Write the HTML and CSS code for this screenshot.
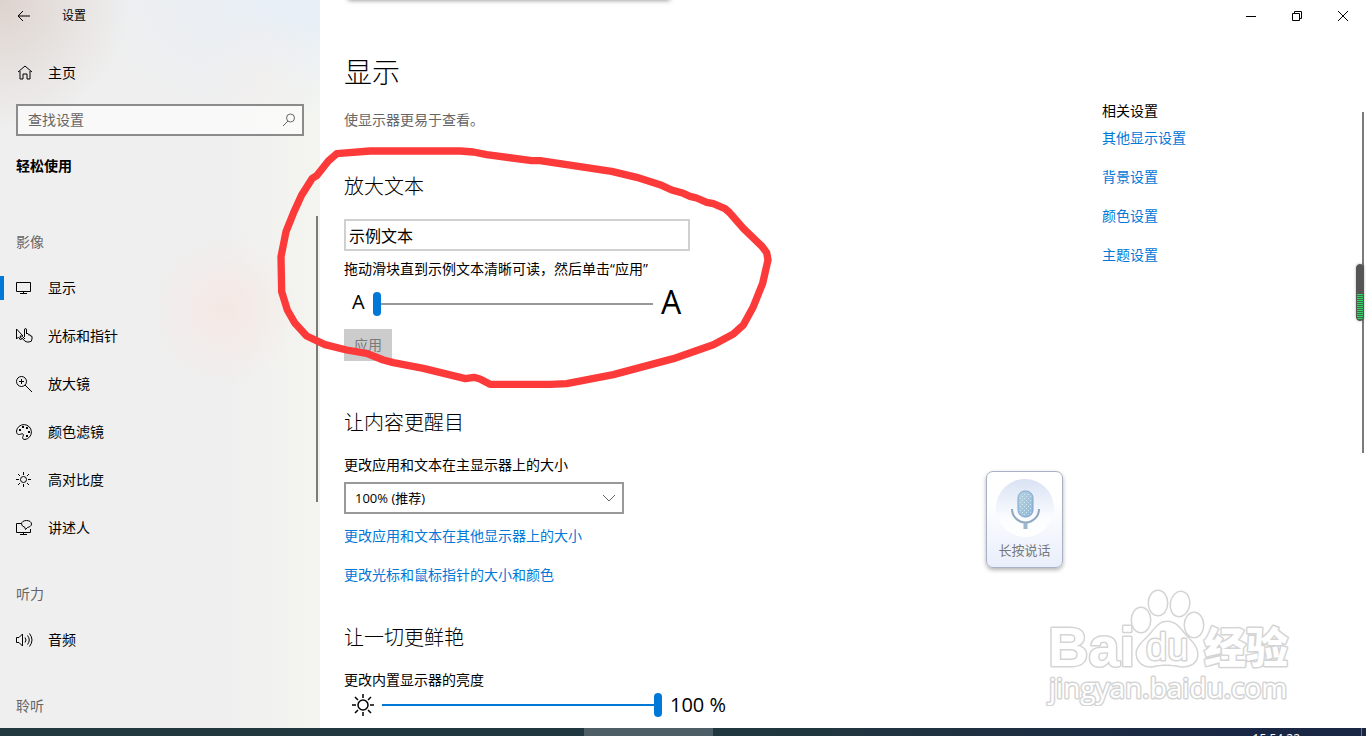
FILE: index.html
```html
<!DOCTYPE html>
<html lang="zh-CN">
<head>
    <meta charset="UTF-8">
    <meta name="viewport" content="width=device-width, initial-scale=1.0">
    <title>设置</title>
    <link rel="stylesheet" href="styles.css">
</head>
<body>
    <div class="window">
        <aside class="sidebar">
            <div class="titlebar">
                <button class="back" aria-label="返回">
                    <svg width="14" height="14" viewBox="0 0 14 14"><path d="M13 7H1M6 2L1 7l5 5"/></svg>
                </button>
                <span class="app-name">设置</span>
            </div>
            <a class="home" href="#">
                <svg width="18" height="18" viewBox="0 0 18 18"><path d="M2 8L9 2l7 6M4 7v8h3v-5h4v5h3V7"/></svg>
                主页
            </a>
            <div class="search">
                <input type="text" placeholder="查找设置" aria-label="查找设置">
                <svg width="14" height="14" viewBox="0 0 14 14"><circle cx="8.500" cy="5" r="4"/><path d="M6 8L1 13"/></svg>
            </div>
            <h3>轻松使用</h3>

            <h4 class="first">影像</h4>
            <nav>
                <a class="active" href="#">
                    <svg width="18" height="18" viewBox="0 0 18 18"><path d="M.5 3.500h14v9H.5zM7.500 12.500v2M4 14.500h7"/></svg>
                    显示
                </a>
                <a href="#">
                    <svg width="18" height="18" viewBox="1 0 18 18"><path d="M1.500 2v10l2-2 2 3 1-1-1.500-3H8zM10 12L7.500 9.500M9.500 10V3q0-1.500 1-1.500t1 1.500v4M11.500 6.500q2-.5 2 1V8q2-1 2 1 1.500-.5 1.500 1v2q0 3-3 3h-2q-2 0-5-4"/></svg>
                    光标和指针
                </a>
                <a href="#">
                    <svg width="18" height="18" viewBox="1 0 18 18"><circle cx="6.500" cy="6.500" r="5"/><path d="M10 10l7 7M6.500 4v5M4 6.500h5"/></svg>
                    放大镜
                </a>
                <a href="#">
                    <svg width="18" height="18" viewBox="1 0 18 18"><path d="M1.500 8A7.500 7.500 0 1 1 10 16.500c-2 0-3-1-2-3s0-3.500-2-2.500-4.500 1-4.500-3z"/><path class="dots" d="M4 6h2v2H4zM7 3h2v2H7zM11 4h2v2h-2zM13 8h2v2h-2zM11 12h2v2h-2z"/></svg>
                    颜色滤镜
                </a>
                <a href="#">
                    <svg width="18" height="18" viewBox="1 0 18 18"><circle cx="8.500" cy="8.500" r="3"/><path d="M8.500 1v3M8.500 13v3M1 8.500h3M13 8.500h3M3 3l2 2M12 12l2 2M14 3l-2 2M5 12l-2 2"/></svg>
                    高对比度
                </a>
                <a href="#">
                    <svg width="18" height="18" viewBox="1 0 18 18"><path d="M6 4.500H1.500v9h14V10M8.500 13.500v2M5 15.500h7M10 8.500Q6.500 7 6.500 5c0-2 2-3.500 5-3.500s5 1.500 5 3.500-2 3-4 3.500l-2 2z"/></svg>
                    讲述人
                </a>
            </nav>

            <h4>听力</h4>
            <nav>
                <a href="#">
                    <svg width="18" height="18" viewBox="0 0 18 18"><path d="M.5 6.500H3L6.500 3v12L3 11.500H.5zM9 6.500q2 2.500 0 5M11.500 4.500q3.500 4.500 0 9M13.500 2.500q5 6.500 0 13"/></svg>
                    音频
                </a>
            </nav>

            <h4>聆听</h4>
            <div class="scrollbar"></div>
        </aside>

        <main class="main">
            <div class="dropped-shadow"></div>
            <div class="titlebar caption">
                <button aria-label="最小化"><svg width="10" height="10" viewBox="0 0 10 10"><path d="M0 5.500h10"/></svg></button>
                <button aria-label="还原"><svg width="10" height="10" viewBox="0 0 10 10"><path d="M.5 2.500h7v7h-7zM2.500 2V.5h7v7H8"/></svg></button>
                <button aria-label="关闭"><svg width="10" height="10" viewBox="0 0 10 10"><path d="M0 0l10 10M10 0L0 10"/></svg></button>
            </div>
            <div class="content">
                <div class="settings">
                    <h1>显示</h1>
                    <p class="intro">使显示器更易于查看。</p>

                    <section>
                        <h2>放大文本</h2>
                        <input class="sample" type="text" value="示例文本" aria-label="示例文本" readonly>
                        <label for="text-size">拖动滑块直到示例文本清晰可读，然后单击“应用”</label>
                        <div class="slider-row">
                            <span class="small-a">A</span>
                            <input class="slider" id="text-size" type="range" min="100" max="225" value="100">
                            <span class="big-a">A</span>
                        </div>
                        <button class="apply" disabled>应用</button>
                    </section>

                    <section>
                        <h2>让内容更醒目</h2>
                        <label for="scale">更改应用和文本在主显示器上的大小</label>
                        <div class="dropdown">
                            <select id="scale">
                                <option>100% (推荐)</option>
                                <option>125%</option>
                                <option>150%</option>
                            </select>
                            <svg width="14" height="8" viewBox="0 0 14 8"><path d="M1 1l6 6 6-6"/></svg>
                        </div>
                        <a class="link" href="#">更改应用和文本在其他显示器上的大小</a>
                        <a class="link" href="#">更改光标和鼠标指针的大小和颜色</a>
                    </section>

                    <section>
                        <h2>让一切更鲜艳</h2>
                        <label for="brightness">更改内置显示器的亮度</label>
                        <div class="slider-row brightness">
                            <svg width="22" height="22" viewBox="0 0 22 22"><circle cx="11" cy="11" r="5"/><path d="M11 0v4M11 18v4M0 11h4M18 11h4M3 3l3 3M16 16l3 3M19 3l-3 3M6 16l-3 3"/></svg>
                            <input class="slider full" id="brightness" type="range" min="0" max="100" value="100">
                            <output for="brightness">100 %</output>
                        </div>
                    </section>
                </div>

                <div class="related">
                    <h5>相关设置</h5>
                    <a class="link" href="#">其他显示设置</a>
                    <a class="link" href="#">背景设置</a>
                    <a class="link" href="#">颜色设置</a>
                    <a class="link" href="#">主题设置</a>
                </div>
            </div>
            <div class="scrollbar"></div>
        </main>
    </div>

    <div class="taskbar">
        <div class="task"></div>
        <time class="clock">15:54:22</time>
    </div>

    <!-- hand drawn circle -->
    <svg class="marker" width="510" height="260" viewBox="0 0 1530 780">
        <path d="M200 41L300 33H570L610 36 650 44 785 62 810 62 1025 94 1100 112 1170 134 1205 150 1240 160 1260 169 1280 174 1310 187 1330 191 1365 206 1378 217 1420 265 1475 318 1490 338 1494 360 1478 430 1450 500 1420 555 1390 582 1330 614 1210 656 1030 704 890 731 840 733H660L630 717 612 712 586 716 460 685 370 668 340 660 290 640 230 630 165 614 110 588 75 550 52 510 35 455 33 350 48 275 70 220 95 165 127 115 140 107 175 63Z"/>
    </svg>

    <button class="voice">
        <svg width="58" height="60" viewBox="0 0 58 60">
            <defs>
                <linearGradient id="disc" x1="0" y1="0" x2="0" y2="1">
                    <stop offset="0" stop-color="#d9e2f4"/>
                    <stop offset="0.7" stop-color="#fcfdff"/>
                    <stop offset="1" stop-color="#ffffff"/>
                </linearGradient>
                <linearGradient id="mic" x1="0" y1="0" x2="1" y2="1">
                    <stop offset="0" stop-color="#b9d3e3"/>
                    <stop offset="1" stop-color="#8db8d6"/>
                </linearGradient>
                <pattern id="mesh" width="4" height="4" patternUnits="userSpaceOnUse">
                    <path d="M0 0h1v1H0zM2 2h1v1H2z" fill="#d5e7e8"/>
                </pattern>
            </defs>
            <circle cx="29" cy="30" r="29" fill="url(#disc)"/>
            <rect x="22" y="13" width="15" height="26" rx="7" fill="url(#mic)" stroke="#7fa5cf"/>
            <rect x="23" y="15" width="13" height="22" rx="6" fill="url(#mesh)"/>
            <path d="M16 31a13 13 0 0 0 27 0" fill="none" stroke="#8fa8bc" stroke-width="2"/>
            <path d="M29.500 45v6" stroke="#9db8cc" stroke-width="4"/>
        </svg>
        长按说话
    </button>

    <div class="meter"></div>

    <svg class="watermark" width="250" height="126" viewBox="0 0 250 126">
        <ellipse cx="99" cy="40" rx="9" ry="12"/>
        <ellipse cx="116" cy="23" rx="9" ry="12"/>
        <ellipse cx="138" cy="24" rx="9" ry="12" transform="rotate(10 138 24)"/>
        <ellipse cx="152" cy="45" rx="9" ry="12"/>
        <path d="M125 42c9 0 13 7 19 14 6 6 12 12 11 20-1 8-9 11-17 10-10-2-18-2-27 0-8 1-15-3-16-11-1-7 5-12 11-18s10-15 19-15z"/>
        <text class="brand" x="6" y="86">Bai</text>
        <text class="du" x="104" y="80">du</text>
        <text class="cjk" x="162" y="83">经验</text>
        <text class="site" x="7" y="118">jingyan.baidu.com</text>
    </svg>
</body>
</html>
```
FILE: styles.css
```css
* {
    box-sizing: border-box;
}
body {
    margin: 0;
    height: 100vh;
    display: flex;
    flex-direction: column;
    overflow: hidden;
    position: relative;
    font-family: "Open Sans", "Noto Sans CJK SC", sans-serif;
    font-size: 14px;
    line-height: 20px;
    color: #000;
    background-color: #fff;
}
h1, h2, h3, h4, h5, p {
    margin: 0;
    font-size: 14px;
    font-weight: normal;
}
a {
    color: inherit;
    text-decoration: none;
}
button, input, select {
    font: inherit;
    color: inherit;
    margin: 0;
}
svg {
    flex: none;
    fill: none;
    stroke: #000;
}
.window {
    flex: 1;
    min-height: 0;
    display: flex;
    overflow: hidden;
}
.titlebar {
    height: 32px;
    display: flex;
    align-items: center;
    font-size: 12px;
}
.titlebar button {
    height: 32px;
    padding: 0;
    border: none;
    background: none;
    display: flex;
    align-items: center;
    justify-content: center;
}
.scrollbar {
    position: absolute;
    width: 2px;
    background-color: #7a7a7a;
}

/* sidebar */
.sidebar {
    position: relative;
    flex: none;
    width: 320px;
    background-color: #efefef;
    background-image:
        radial-gradient(circle at 0 0, #ddd3ce 0, rgba(230, 222, 217, 0) 130px),
        radial-gradient(circle at 225px 310px, #f5e8e4 0, rgba(244, 234, 230, 0) 75px),
        radial-gradient(circle at 260px 75px, rgba(244, 238, 236, 0.5) 0, rgba(244, 238, 236, 0) 60px),
        radial-gradient(ellipse 240px 120px at 100% 0, #e6eef7 0, rgba(233, 239, 246, 0) 100%),
        linear-gradient(to right, rgba(244, 245, 239, 0) 70%, #f4f5ef 100%);
}
.back {
    width: 48px;
}
.app-name {
    padding-left: 14px;
}
.home, .sidebar nav a {
    height: 48px;
    padding-left: 16px;
    display: flex;
    align-items: center;
    gap: 14px;
}
.home {
    margin-top: 17px;
}
.search {
    position: relative;
    margin: 7px 16px 0;
}
.search input {
    display: block;
    width: 100%;
    height: 32px;
    padding: 0 32px 2px 10px;
    border: 2px solid #8b8b8b;
    background-color: rgba(255, 255, 255, 0.6);
}
.search input::placeholder {
    color: #666;
    opacity: 1;
}
.search svg {
    position: absolute;
    right: 8px;
    top: 9px;
    stroke: #666;
}
.sidebar h3 {
    margin: 20px 16px 0;
    font-weight: bold;
}
.sidebar h4 {
    margin: 32px 16px 12px;
    color: #666;
}
.sidebar h4.first {
    margin-top: 56px;
}
.sidebar nav .active {
    background: linear-gradient(#0078d7, #0078d7) 0 center / 4px 24px no-repeat;
}
.dots {
    fill: #000;
    stroke: none;
}
.sidebar .scrollbar {
    right: 2px;
    top: 216px;
    height: 286px;
}

/* main pane */
.main {
    position: relative;
    flex: 1;
    min-width: 0;
}
.dropped-shadow {
    position: absolute;
    left: 28px;
    top: -6px;
    width: 322px;
    height: 6px;
    box-shadow: 0 0 5px rgba(0, 0, 0, 0.5);
}
.caption {
    justify-content: flex-end;
}
.caption button {
    width: 46px;
}
.content {
    display: flex;
    justify-content: space-between;
    padding: 20px 0 0 24px;
}
.content label, .content .link {
    display: block;
}
.link {
    color: #0078d7;
}
h1 {
    font-size: 28px;
    line-height: 40px;
}
h2 {
    font-size: 20px;
    line-height: 28px;
    margin-bottom: 18px;
}
h1, h2 {
    font-weight: 300;
}
.intro {
    margin: 18px 0 43px;
    color: #666;
}
section {
    margin-bottom: 39px;
}
section:first-of-type {
    margin-bottom: 48px;
}
.sample {
    display: block;
    width: 346px;
    height: 32px;
    margin-bottom: 8px;
    padding: 0 3px;
    border: 2px solid #d0d0d0;
    font-size: 16px;
}
.slider-row {
    display: flex;
    align-items: center;
    height: 32px;
    padding-left: 8px;
    margin: 9px 0;
}
.small-a {
    width: 21px;
    padding-bottom: 4px;
    font-size: 20px;
}
.big-a {
    padding: 0 0 4px 8px;
    font-size: 32px;
}
.slider {
    -webkit-appearance: none;
    appearance: none;
    width: 280px;
    height: 24px;
    background: linear-gradient(#999, #999) center / 100% 2px no-repeat;
}
.slider.full {
    background-image: linear-gradient(#0078d7, #0078d7);
}
.slider::-webkit-slider-thumb {
    -webkit-appearance: none;
    width: 8px;
    height: 24px;
    border-radius: 4px;
    background-color: #0078d7;
}
.brightness {
    height: 30px;
    margin: 0;
    gap: 8px;
}
.brightness svg {
    stroke-width: 1.5;
}
.brightness output {
    font-size: 20px;
}
.apply {
    width: 48px;
    height: 32px;
    padding: 0;
    border: none;
    background-color: #ccc;
    color: #7a7a7a;
    display: block;
}
.dropdown {
    position: relative;
    width: 280px;
    margin: 7px 0 12px;
}
.dropdown select {
    display: block;
    -webkit-appearance: none;
    appearance: none;
    width: 100%;
    height: 32px;
    padding: 0 32px 0 9px;
    border: 2px solid #999;
    border-radius: 0;
    background-color: #fff;
    font-size: 13px;
}
.dropdown svg {
    position: absolute;
    right: 8px;
    top: 12px;
    stroke: #666;
}
.link + .link {
    margin-top: 19px;
}
.related {
    width: 264px;
    padding-top: 49px;
}
.related h5 {
    margin-bottom: 7px;
}
.main .scrollbar {
    right: 2px;
    top: 112px;
    height: 341px;
}

/* taskbar */
.taskbar {
    flex: none;
    height: 8px;
    display: flex;
    justify-content: space-between;
    overflow: hidden;
    background: linear-gradient(to right, #22393f, #20363f 60%, #1a2744 90%);
}
.task {
    width: 129px;
    margin-left: 584px;
    background-color: #4e5e66;
}
.clock {
    margin-right: 4px;
    padding: 3px 61px 0 0;
    border-right: 1px solid #6b7388;
    font-size: 12px;
    line-height: 16px;
    color: #fff;
}

/* things floating over the window */
.marker {
    position: absolute;
    left: 270px;
    top: 140px;
    stroke: #fc3a39;
    stroke-width: 22;
    stroke-linejoin: round;
    pointer-events: none;
}
.voice {
    position: absolute;
    right: 303px;
    top: 471px;
    width: 77px;
    height: 97px;
    padding: 0;
    border: 1px solid #a9b1c4;
    border-radius: 7px;
    background: linear-gradient(#fff 30%, #e9eefb);
    box-shadow: 0 2px 4px rgba(0, 0, 0, 0.3);
    display: flex;
    flex-direction: column;
    align-items: center;
    gap: 2px;
    font-size: 13px;
    color: #777;
}
.voice svg {
    margin-top: 6px;
    stroke: none;
}
.meter {
    position: absolute;
    right: 2px;
    top: 264px;
    width: 8px;
    height: 57px;
    border: 1px solid #555;
    border-radius: 4px;
    background: repeating-linear-gradient(#2fd863 0 1px, #3c6a4a 1px 2px) 0 29px no-repeat #555;
    box-shadow: 0 0 3px rgba(0, 0, 0, 0.3);
}
.watermark {
    position: absolute;
    right: 74px;
    top: 580px;
    fill: #fff;
    stroke: #d4d4d4;
    stroke-width: 3;
    stroke-linejoin: round;
    paint-order: stroke;
    pointer-events: none;
}
.brand {
    font: bold 56px "Liberation Sans", sans-serif;
}
.du {
    font: 38px "Liberation Sans", sans-serif;
}
.cjk {
    font: 900 42px "Noto Sans CJK SC", sans-serif;
}
.site {
    font: 28px "Open Sans", sans-serif;
}
```
